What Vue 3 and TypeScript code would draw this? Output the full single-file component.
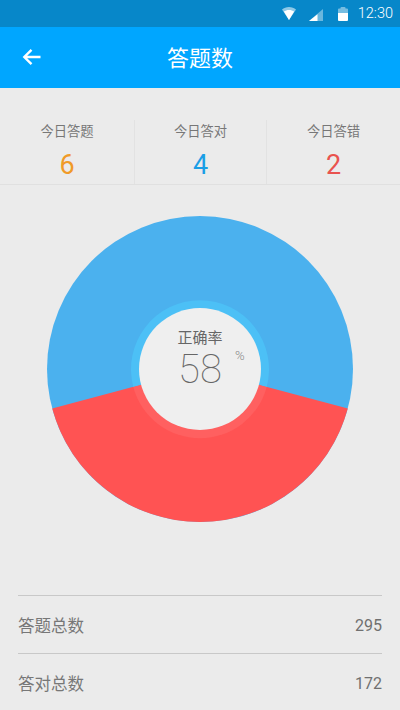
<script setup lang="ts">
const stats = [
  { label: '今日答题', value: 6, color: '#f09a28' },
  { label: '今日答对', value: 4, color: '#1a9ee6' },
  { label: '今日答错', value: 2, color: '#e9534f' },
]
const totals = [
  { label: '答题总数', value: 295 },
  { label: '答对总数', value: 172 },
]
</script>

<template>
  <div class="page">
    <div class="status">
      <svg class="wifi" width="14" height="13" viewBox="0 0 14 13"><path d="M0 2.500C1.800 1 4.200 0 7 0s5.200 1 7 2.500L7 13z" fill="#fff" opacity=".55" /><path d="M1.900 4.600C3.300 3.600 5 3 7 3s3.700.6 5.100 1.600L7 13z" fill="#fff" /></svg>
      <svg class="signal" width="14" height="12" viewBox="0 0 14 12"><path d="M14 0v12H0z" fill="#fff" opacity=".4" /><path d="M8.500 5.200V12H0z" fill="#fff" /></svg>
      <svg class="battery" width="10" height="14" viewBox="0 0 10 14"><path d="M2.500 1a1 1 0 0 1 1-1h3a1 1 0 0 1 1 1v.5H9a1 1 0 0 1 1 1V6H0V2.500a1 1 0 0 1 1-1h1.500z" fill="#fff" opacity=".45" /><path d="M0 6h10v7a1 1 0 0 1-1 1H1a1 1 0 0 1-1-1z" fill="#fff" /></svg>
      <span class="time">12:30</span>
    </div>
    <header class="toolbar">
      <svg class="back" width="20" height="18" viewBox="0 0 20 18"><path d="M18.500 9H2.500M9.500 1.800 2.300 9l7.200 7.200" fill="none" stroke="#fff" stroke-width="2.400" /></svg>
      <h1>答题数</h1>
    </header>
    <section class="stats">
      <div v-for="s in stats" :key="s.label" class="stat">
        <span class="stat-label">{{ s.label }}</span>
        <span class="stat-value" :style="{ color: s.color }">{{ s.value }}</span>
      </div>
    </section>
    <section class="chart">
      <div class="pie">
        <svg width="306" height="306" viewBox="0 0 306 306">
          <circle cx="153" cy="153" r="153" fill="#4bb1ee" />
          <path d="M153 153 5.200 192.500A153 153 0 0 0 300.800 192.500z" fill="#ff5353" />
          <path d="M86.300 170.900A69 69 0 1 1 219.700 170.900L153 153z" fill="#4cc0f6" />
          <path d="M86.300 170.900A69 69 0 0 0 219.700 170.900L153 153z" fill="#ff6060" />
          <circle cx="153" cy="153" r="61" fill="#efefef" />
        </svg>
        <div class="rate">
          <span class="rate-label">正确率</span>
          <span class="rate-value">58<small>%</small></span>
        </div>
      </div>
    </section>
    <section class="totals">
      <div v-for="t in totals" :key="t.label" class="row">
        <span>{{ t.label }}</span>
        <span class="num">{{ t.value }}</span>
      </div>
    </section>
  </div>
</template>

<style>
html, body { margin: 0; background: #ebebeb; }
</style>

<style scoped>
.page {
  width: 400px;
  height: 710px;
  overflow: hidden;
  display: flex;
  flex-direction: column;
  background: #ebebeb;
  font-family: "Noto Sans CJK SC", "Noto Sans", sans-serif;
}
.status {
  height: 27px;
  flex: none;
  background: #0787c9;
  display: flex;
  align-items: center;
  justify-content: flex-end;
  padding-right: 7px;
  box-sizing: border-box;
}
.wifi { margin-right: 13px; }
.signal { margin-right: 15px; margin-top: 2px; }
.battery { margin-right: 10px; }
.time {
  font-family: Roboto, sans-serif;
  font-size: 14.500px;
  font-weight: 300;
  color: #fff;
}
.toolbar {
  height: 61px;
  flex: none;
  background: #00a6ff;
  display: flex;
  align-items: center;
  justify-content: center;
  position: relative;
}
.back { position: absolute; left: 22px; top: 21px; }
h1 {
  margin: 0 0 3px;
  font-size: 22px;
  font-weight: 400;
  color: #fff;
  line-height: 1;
}
.stats {
  height: 97px;
  flex: none;
  box-sizing: border-box;
  padding-top: 32px;
  display: grid;
  grid-template-columns: 134px 132px 134px;
  border-bottom: 1px solid #e0e0e0;
}
.stat {
  display: flex;
  flex-direction: column;
  align-items: center;
  border-left: 1px solid #e2e2e2;
}
.stat:first-child { border-left: none; }
.stat-label {
  font-size: 13.300px;
  line-height: 22px;
  color: #777;
}
.stat-value {
  font-family: Roboto, sans-serif;
  font-size: 27px;
  line-height: 30px;
  margin-top: 8px;
}
.chart {
  flex: none;
  height: 410px;
  display: flex;
  justify-content: center;
  padding-top: 31px;
  box-sizing: border-box;
}
.pie {
  width: 306px;
  height: 306px;
  display: grid;
  place-items: center;
}
.pie > * { grid-area: 1 / 1; }
.rate {
  display: flex;
  flex-direction: column;
  align-items: center;
  margin-bottom: 20px;
}
.rate-label {
  font-size: 15px;
  line-height: 22px;
  color: #666;
}
.rate-value {
  font-family: Roboto, sans-serif;
  font-weight: 100;
  font-size: 40px;
  line-height: 44px;
  color: #666;
  position: relative;
}
.rate-value small {
  position: absolute;
  left: 57px;
  top: 1px;
  font-size: 13px;
  line-height: 14px;
  font-weight: 300;
  color: #888;
}
.totals { padding: 0 18px; }
.row {
  height: 58px;
  box-sizing: border-box;
  border-top: 1px solid #c8c8c8;
  display: flex;
  align-items: center;
  justify-content: space-between;
  font-size: 16.500px;
  line-height: 54px;
  color: #777;
}
.num {
  font-family: Roboto, sans-serif;
  font-size: 16px;
  color: #707070;
  padding-top: 2px;
}
</style>
